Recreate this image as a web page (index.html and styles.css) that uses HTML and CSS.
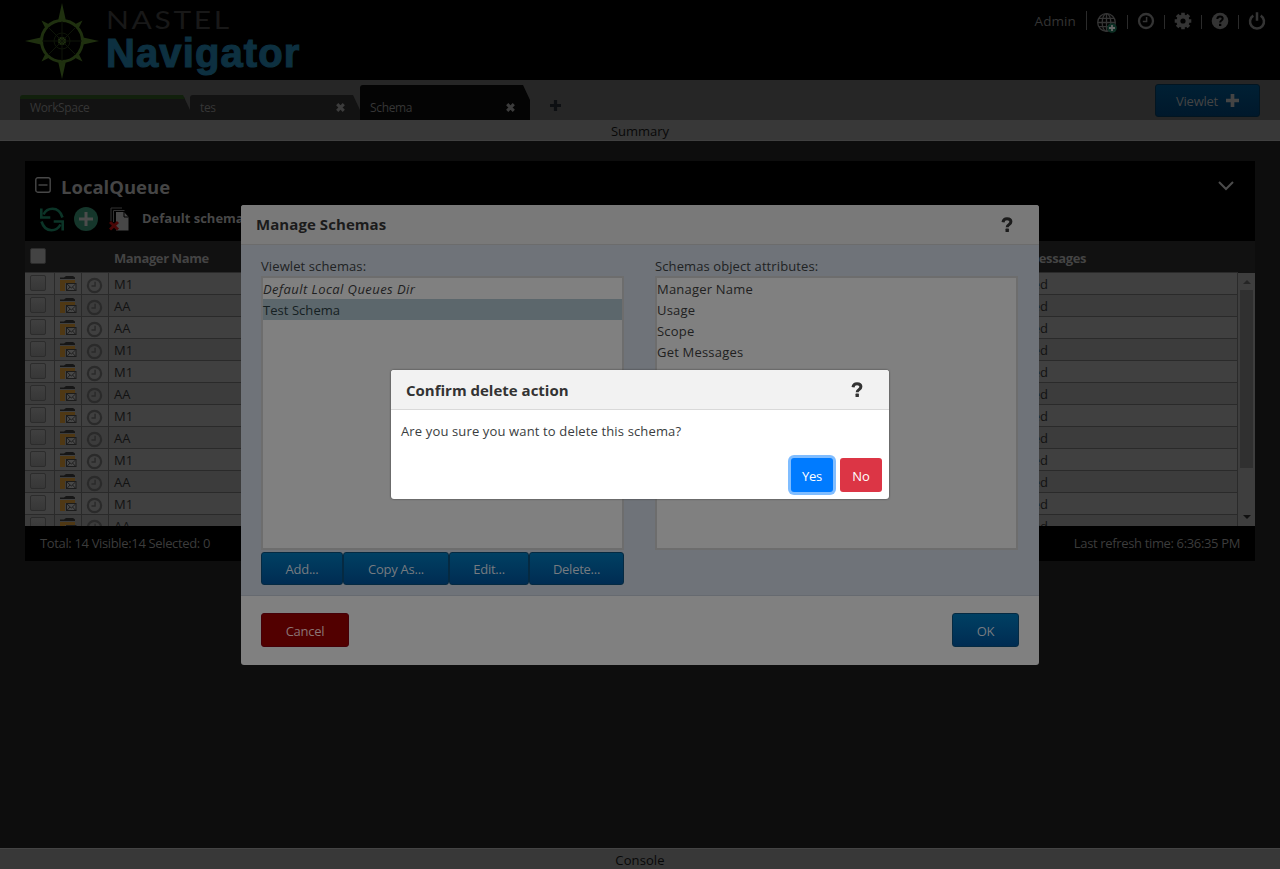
FILE: index.html
```
<!DOCTYPE html>
<html lang="en">
<head>
<meta charset="utf-8">
<title>Nastel Navigator</title>
<link rel="stylesheet" href="styles.css">
</head>
<body>
<svg class="defs" width="0" height="0">
  <symbol id="clock" viewBox="0 0 18 18"><circle cx="9" cy="9" r="7" fill="none" stroke="currentColor" stroke-width="2.3"/><path d="M9.6 5v4.6H5.8" fill="none" stroke="currentColor" stroke-width="1.5"/></symbol>
  <symbol id="folder" viewBox="0 0 17 16"><path d="M0 1.500h4L6 0h7l2 1.500V3H0z" fill="#161616"/><path d="M0 4h15v3H0zM0 7h5v8H0z" fill="#4f3814"/><rect x="6.500" y="7.500" width="9.500" height="7" fill="#474747" stroke="#1c1c1c"/><path d="M7 8l4.300 4L15.500 8M7 14.300l3-3.300M15.500 14.300l-3-3.300" fill="none" stroke="#1c1c1c" stroke-width=".9"/></symbol>
  <symbol id="cross" viewBox="0 0 10 10"><path d="M2 2l6 6M8 2L2 8" stroke="currentColor" stroke-width="2.8"/></symbol>
  <symbol id="plus" viewBox="0 0 12 12"><path d="M6 0v12M0 6h12" stroke="currentColor" stroke-width="3.4"/></symbol>
  <symbol id="question" viewBox="0 0 12 16"><path d="M2 5.2C2.3 2.8 4 1.7 6 1.7c2.300 0 3.900 1.200 3.900 3 0 2.900-3.700 2.900-3.700 5.500" fill="none" stroke="currentColor" stroke-width="3"/><rect x="4.500" y="11.600" width="3.400" height="3.400" rx=".6" fill="currentColor"/></symbol>
</svg>
<div class="page">
  <header class="top">
    <div class="brand">
      <svg class="compass" viewBox="0 0 74 76" width="74" height="76">
        <g fill="#1f300f"><path d="M37 0l4 18h-8zM37 76l4-18h-8zM0 38l18-4v8zM74 38l-18-4v8z"/><path d="M16.500 17.500l8 4-4 4zM57.500 17.500l-8 4 4 4zM16.500 58.500l8-4-4-4zM57.500 58.500l-8-4 4-4z"/><circle cx="37" cy="38" r="4"/></g>
        <circle cx="37" cy="38" r="20.500" fill="none" stroke="#1f300f" stroke-width="3"/>
        <circle cx="37" cy="38" r="8" fill="none" stroke="#0e1508"/>
        <path d="M37 18v40M17 38h40M23 24l28 28M51 24L23 52" stroke="#0e1508"/>
      </svg>
      <div class="wordmark"><span class="nastel">NASTEL</span><span class="navigator">Navigator</span></div>
    </div>
    <nav class="tools">
      <span class="user">Admin</span>
      <i class="sep tall"></i>
      <svg class="globe" viewBox="0 0 20 20" width="20" height="20"><g fill="none" stroke="#353535" stroke-width="1.300"><circle cx="9.500" cy="9.500" r="8.800"/><ellipse cx="9.500" cy="9.500" rx="4.300" ry="8.800"/><path d="M9.500 1v17M1 9.500h17M2 5.300h15M2 13.700h15"/></g><circle cx="15" cy="15" r="4.800" fill="#0c2f24"/><path d="M15 12v6M12 15h6" stroke="#666" stroke-width="1.800"/></svg>
      <i class="sep"></i>
      <svg class="tool" width="18" height="18"><use href="#clock"/></svg>
      <i class="sep"></i>
      <svg class="tool" viewBox="0 0 18 18" width="18" height="18"><circle cx="9" cy="9" r="4.600" fill="none" stroke="currentColor" stroke-width="4"/><path d="M9 .700v3M9 14.300v3M.700 9h3M14.300 9h3M3.100 3.100l2 2M12.900 12.900l2 2M14.900 3.100l-2 2M5.100 12.900l-2 2" stroke="currentColor" stroke-width="3.600"/></svg>
      <i class="sep"></i>
      <svg class="tool" viewBox="0 0 18 18" width="18" height="18"><circle cx="9" cy="9" r="8.300" fill="currentColor"/><path d="M6.300 7C6.500 5.300 7.600 4.600 9 4.600c1.600 0 2.700.800 2.700 2.100 0 1.800-2.500 1.900-2.500 3.700" fill="none" stroke="#000" stroke-width="2"/><path d="M8 11.800h2.300V14H8z"/></svg>
      <i class="sep"></i>
      <svg class="tool" viewBox="0 0 18 18" width="18" height="18"><path d="M5.300 3.600a7 7 0 1 0 7.400 0M9 .300v8.500" fill="none" stroke="currentColor" stroke-width="2.500"/></svg>
    </nav>
  </header>
  <div class="tabbar">
    <div class="tab work"><span>WorkSpace</span></div>
    <div class="tab"><span>tes</span><svg width="11" height="11"><use href="#cross"/></svg></div>
    <div class="tab active"><span>Schema</span><svg width="11" height="11"><use href="#cross"/></svg></div>
    <svg class="newtab" width="11" height="11"><use href="#plus"/></svg>
    <button class="btn viewlet"><span>Viewlet</span><svg width="13" height="13"><use href="#plus"/></svg></button>
  </div>
  <div class="strip">Summary</div>
  <main class="main">
    <section class="panel">
      <div class="panel-head">
        <div class="title-row">
          <svg viewBox="0 0 16 16" width="16" height="16"><rect x=".8" y=".8" width="14.400" height="14.400" rx="2" fill="none" stroke="#484848" stroke-width="1.400"/><path d="M3.500 8h9" stroke="#484848" stroke-width="1.400"/></svg>
          <h2>LocalQueue</h2>
          <svg class="chev" viewBox="0 0 16 10" width="16" height="10"><path d="M1 1l7 7 7-7" fill="none" stroke="#4c4c4c" stroke-width="2"/></svg>
        </div>
        <div class="action-row">
          <svg viewBox="0 0 24 25" width="24" height="25"><g fill="none" stroke="#0b3427" stroke-width="2.600"><path d="M22.500 10.500C20.500 4 17 1.800 12.500 1.800 8 1.800 5 4.500 3.500 7.500M1.500 14.500C3.500 21 7 23.200 11.500 23.200c4.500 0 7.500-2.700 9-5.700"/><path d="M1.300 1.500v9h9M22.700 23.500v-9h-9"/></g></svg>
          <svg viewBox="0 0 24 24" width="24" height="24"><circle cx="12" cy="12" r="12" fill="#15362b"/><path d="M12 5v14M5 12h14" stroke="#4c4c4c" stroke-width="3"/></svg>
          <svg class="pages" viewBox="0 0 20 24" width="20" height="24"><path d="M2 14V1h11M4.500 15V3.500h11" fill="none" stroke="#333"/><path d="M7 5h8l4.500 5v13.500H7z" fill="#474747"/><path d="M15 5v5h4.500" fill="none" stroke="#000"/><path d="M1 15l8 7.500M9 15l-8 7.500" stroke="#4a0606" stroke-width="3"/></svg>
          <b>Default schema</b>
        </div>
      </div>
      <div class="thead"><i class="check solid"></i><b class="th-name">Manager Name</b><b class="th-msg">Messages</b></div>
      <div class="grid">
        <div class="rows" id="rows"></div>
        <div class="scroll"><i class="up"></i><i class="thumb"></i><i class="down"></i></div>
      </div>
      <div class="panel-foot"><span class="total">Total: 14 Visible:14 Selected: 0</span><span class="refresh">Last refresh time: 6:36:35 PM</span></div>
    </section>
  </main>
  <div class="strip console">Console</div>
</div>

<section class="modal manage">
  <header class="modal-head"><h3>Manage Schemas</h3><svg width="12" height="16"><use href="#question"/></svg></header>
  <div class="manage-body">
    <div class="col">
      <label>Viewlet schemas:</label>
      <ul class="list"><li><em>Default Local Queues Dir</em></li><li class="sel">Test Schema</li></ul>
      <div class="btns"><button class="btn b1">Add...</button><button class="btn b2">Copy As...</button><button class="btn b3">Edit...</button><button class="btn b4">Delete...</button></div>
    </div>
    <div class="col">
      <label>Schemas object attributes:</label>
      <ul class="list"><li>Manager Name</li><li>Usage</li><li>Scope</li><li>Get Messages</li></ul>
    </div>
  </div>
  <footer class="manage-foot"><button class="btn cancel">Cancel</button><button class="btn ok">OK</button></footer>
</section>

<section class="modal confirm">
  <header class="modal-head"><h3>Confirm delete action</h3><svg width="12" height="16"><use href="#question"/></svg></header>
  <p>Are you sure you want to delete this schema?</p>
  <div class="answers"><button class="yes">Yes</button><button class="no">No</button></div>
</section>
<script src="app.js"></script>
</body>
</html>
```
FILE: app.js
```
// Fill the queue table, one row per local queue.
const managers = ["M1", "AA", "AA", "M1", "M1", "AA", "M1", "AA", "M1", "AA", "M1", "AA"];
document.getElementById("rows").innerHTML = managers.map(name => `
  <div class="row">
    <span class="c-check"><i class="check"></i></span>
    <span class="c-icon"><svg width="17" height="16"><use href="#folder"/></svg></span>
    <span class="c-icon clock"><svg width="17" height="17"><use href="#clock"/></svg></span>
    <span class="c-name">${name}</span>
    <span class="c-msg">Enabled</span>
  </div>`).join("");
```
FILE: styles.css
```
* { box-sizing: border-box; }
body { margin: 0; background: #0d0d0d; font: 13px/21px "Open Sans", "Noto Sans", sans-serif; color: #202223; overflow: hidden; }
h2, h3, p, ul { margin: 0; padding: 0; }
button { font: inherit; padding: 0; }
svg { display: block; flex: none; }
.defs { position: absolute; }
.page { height: 869px; display: flex; flex-direction: column; }

.top { height: 80px; background: #000; display: flex; justify-content: space-between; }
.brand { display: flex; padding: 3px 0 0 25px; gap: 7px; }
.wordmark { display: flex; flex-direction: column; padding-top: 4px; }
.nastel { font: 25px/24px Lato, sans-serif; letter-spacing: 2.2px; color: #181818; transform: scaleX(1.2); transform-origin: 0 0; }
.navigator { font: bold 40px/44px "Liberation Sans", sans-serif; letter-spacing: 1.1px; color: #0d3040; -webkit-text-stroke: 1.2px #0d3040; }
.tools { display: flex; align-items: flex-start; padding: 11px 14px 0 0; color: #343434; }
.user { font-size: 13.500px; letter-spacing: .1px; margin-right: 10px; }
.sep { width: 1px; height: 14px; background: #2b2b2b; margin: 4px 9px 0; }
.sep.tall { height: 19px; margin: 0 10px 0 0; }
.globe { margin: 2px 1px 0 0; }
.tool { margin-top: 1px; }

.tabbar { height: 40px; background: #262626; display: flex; align-items: flex-end; padding-left: 20px; }
.tab { width: 170px; height: 25px; padding: 3px 14px 0 10px; background: #121212; color: #363636; font-size: 12px; letter-spacing: -.35px; line-height: 20px; display: flex; justify-content: space-between; border-radius: 3px 0 0 0; clip-path: polygon(0 0, 163px 0, 170px 15px, 170px 100%, 0 100%); }
.tab svg { margin-top: 4px; color: #3c3c3c; }
.tab.work { border-top: 4px solid #11200c; padding-top: 0; line-height: 18px; }
.tab.active { height: 35px; padding-top: 13px; background: #040404; }
.newtab { margin: 0 0 9px 20px; color: #0d0f12; }
.btn { height: 33px; border: 1px solid #052a42; border-radius: 3px; background: linear-gradient(#004063, #002c52); color: #777b80; font-size: 13px; letter-spacing: -.25px; line-height: 32px; }
.viewlet { width: 105px; margin: 0 20px 3px auto; display: flex; align-items: center; justify-content: center; gap: 8px; background: linear-gradient(#002034, #00182b); border-color: #021521; color: #444; }
.strip { height: 21px; flex: none; background: #383838; border-bottom: 1px solid #404040; text-align: center; color: #080808; line-height: 22px; }
.console { border: 0; border-top: 1px solid #444; letter-spacing: .1px; }
.main { flex: 1; padding: 20px 25px; }

.panel { width: 1230px; height: 400px; display: flex; flex-direction: column; background: #000; }
.panel-head { height: 80px; }
.title-row { display: flex; height: 42px; padding: 16px 21px 0 10px; gap: 10px; }
.title-row h2 { font-size: 18.500px; line-height: 20px; color: #454545; }
.chev { margin: 4px 0 0 auto; }
.action-row { display: flex; align-items: center; padding-left: 15px; gap: 10px; height: 32px; color: #474747; }
.action-row b { margin-left: 3px; line-height: 20px; padding-bottom: 2px; }
.pages { margin-left: 1px; }
.thead { height: 31px; background: #111; display: flex; align-items: center; color: #444; flex: none; padding-left: 5px; }
.thead b { margin-top: 4px; letter-spacing: -.4px; }
.th-name { margin-left: 68px; width: 738px; }
.th-msg { width: 234px; text-align: right; }
.check { display: block; width: 16px; height: 16px; border: 1px solid #2c2c2c; border-radius: 2px; background: linear-gradient(#404040, #373737); }
.check.solid { background: #434343; margin-bottom: 1px; }
.grid { height: 254px; display: flex; overflow: hidden; background: #111; }
.rows { width: 1213px; border-right: 1px solid #2a2a2a; }
.row { display: flex; height: 22px; border-top: 1px solid #2a2a2a; background: #404040; color: #121212; }
.row:nth-child(even) { background: #3c3c3c; }
.row span { border-right: 1px solid #2a2a2a; flex: none; }
.row .c-check { width: 30px; padding: 2px 0 0 5px; }
.row .c-icon { width: 27px; padding: 3px 0 0 5px; color: #2a2a2a; }
.row .clock { padding: 4px 0 0 4px; }
.row .c-name { width: 140px; padding-left: 5px; border: 0; line-height: 22px; }
.row .c-msg { width: 799px; border: 0; text-align: right; line-height: 22px; }
.scroll { width: 17px; margin-top: 1px; background: #3e3e3e; display: flex; flex-direction: column; align-items: center; padding: 7px 0 7px; }
.up, .down { border: 4px solid transparent; }
.up { border-top: 0; border-bottom-color: #252525; }
.down { border-bottom: 0; border-top-color: #111; margin-top: auto; }
.thumb { width: 13px; height: 178px; margin-top: 6px; background: #303030; }
.panel-foot { height: 35px; display: flex; justify-content: space-between; padding: 0 15px; line-height: 35px; letter-spacing: -.35px; color: #3c3c3c; }

.modal { position: absolute; border-radius: 3px; overflow: hidden; }
.manage { left: 241px; top: 205px; width: 798px; height: 460px; background: #808080; }
.modal-head { height: 40px; display: flex; justify-content: space-between; padding: 0 26px 0 15px; border-bottom: 1px solid #6c6c6c; background: #797979; color: #1b1b1b; }
.modal-head h3 { font-size: 15px; line-height: 40px; }
.modal-head svg { margin-top: 12px; }
.manage .modal-head h3 { line-height: 38px; letter-spacing: .07px; }
.manage-body { height: 351px; background: #6f7379; border-bottom: 1px solid #666a70; display: flex; padding: 10px 20px 0; gap: 31px; letter-spacing: .1px; }
.col { width: 363px; }
.col label { display: block; height: 21px; line-height: 22px; }
.list { list-style: none; width: 363px; height: 274px; border: 2px solid #6d6d6d; background: #808080; color: #202020; letter-spacing: .2px; }
.list li { height: 21px; line-height: 23px; }
.list em { letter-spacing: .44px; }
.list .sel { background: #5c676c; color: #152022; letter-spacing: .05px; }
.btns { display: flex; margin-top: 2px; }
.b1 { width: 82px; } .b2 { width: 106px; } .b3 { width: 80px; } .b4 { width: 95px; }
.manage-foot { display: flex; justify-content: space-between; padding: 17px 20px; }
.manage-foot .btn { height: 34px; line-height: 34px; }
.cancel { width: 88px; background: #520000; border-color: #450008; color: #8a7474; }
.ok { width: 67px; }

.confirm { left: 391px; top: 370px; width: 498px; height: 129px; background: #fff; box-shadow: 0 0 2px #333; }
.confirm .modal-head { background: #f2f2f2; border-color: #d9d9d9; color: #333; }
.confirm p { padding: 11px 10px 0; color: #3a3d40; letter-spacing: .14px; }
.answers { display: flex; justify-content: flex-end; gap: 7px; padding: 16px 7px 0; }
.answers button { width: 42px; height: 34px; border: 0; border-radius: 3px; background: #dc3545; color: #fff; line-height: 36px; }
.answers .yes { background: #007bff; box-shadow: 0 0 0 3px #80bdff; letter-spacing: -.2px; }
```
